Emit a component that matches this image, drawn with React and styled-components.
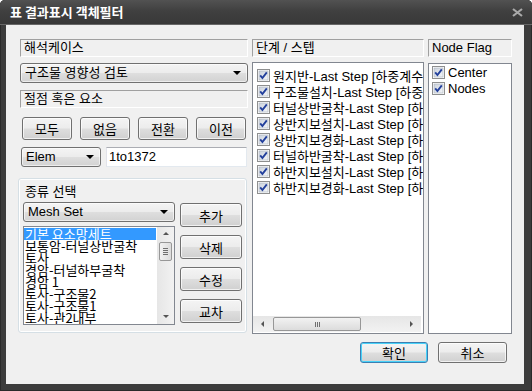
import React from 'react'
import styled, { createGlobalStyle } from 'styled-components'

const GlobalStyle = createGlobalStyle`
  body {
    margin: 0;
    background: #ffffff;
    font-family: "Liberation Sans", "Noto Sans CJK KR", sans-serif;
  }
`

const Window = styled.div`
  width: 532px;
  height: 391px;
  box-sizing: border-box;
  display: flex;
  flex-direction: column;
  background: #3c3c3c;
  border-radius: 5px 5px 0 0;
  overflow: hidden;
  box-shadow: inset 0 0 0 1px #2a2a2a;
`

const TitleBar = styled.div`
  height: 24px;
  flex: none;
  display: flex;
  align-items: center;
  justify-content: space-between;
  padding: 0 9px 0 10px;
  background: linear-gradient(#525252, #404040 45%, #383838);
  border-bottom: 1px solid #676767;
`

const Title = styled.span`
  color: #ffffff;
  font-family: "Noto Sans CJK KR", sans-serif;
  font-weight: bold;
  font-size: 13px;
  line-height: 16px;
`

const Client = styled.div`
  flex: 1;
  margin: 0 8px 7px 6px;
  background: #f0f0f0;
  padding: 14px 12px 0 14px;
  display: flex;
  flex-direction: column;
`

const Columns = styled.div`
  display: grid;
  grid-template-columns: 228px 172px 84px;
  column-gap: 4px;
  height: 295px;
`

const Column = styled.div`
  display: flex;
  flex-direction: column;
  min-width: 0;
`

const Caption = styled.div`
  flex: none;
  height: 18px;
  box-sizing: border-box;
  margin-top: ${p => p.$gap || 0}px;
  border: 1px solid;
  border-color: #a0a0a0 #ffffff #ffffff #a0a0a0;
  padding-left: 3px;
  font-size: 13px;
  line-height: 16px;
  color: #000;
  white-space: nowrap;
`

const Combo = styled.div`
  flex: none;
  width: ${p => (p.$w ? `${p.$w}px` : 'auto')};
  height: 20px;
  box-sizing: border-box;
  margin-top: ${p => p.$gap || 0}px;
  border: 1px solid #707070;
  border-radius: 3px;
  background: linear-gradient(#f4f4f4, #ececec 48%, #dedede 52%, #d2d2d2);
  box-shadow: inset 0 0 0 1px rgba(255, 255, 255, 0.6);
  display: flex;
  align-items: center;
  justify-content: space-between;
  padding: 0 6px 0 4px;
  font-size: 13px;
  line-height: 16px;
  white-space: nowrap;
`

const Arrow = styled.span`
  width: 0;
  height: 0;
  border-left: 4px solid transparent;
  border-right: 4px solid transparent;
  border-top: 4px solid #000;
`

const PushButton = styled.button`
  flex: none;
  width: ${p => p.$w}px;
  height: ${p => p.$h}px;
  box-sizing: border-box;
  padding: 0;
  border: 1px solid ${p => (p.$primary ? '#3c7fb1' : '#707070')};
  border-radius: 3px;
  background: linear-gradient(#f4f4f4, #ececec 48%, #dedede 52%, #d0d0d0);
  box-shadow: inset 0 0 0 1px ${p => (p.$primary ? '#48d2f9' : 'rgba(255,255,255,0.7)')};
  font-family: "Noto Sans CJK KR", sans-serif;
  font-size: 13px;
  line-height: 1;
  color: #000;
`

const ButtonRow = styled.div`
  display: flex;
  gap: 8px;
  margin-top: 9px;
  padding-left: 2px;
`

const ElemRow = styled.div`
  display: flex;
  gap: 5px;
  margin-top: 7px;
  padding: 0 1px;
`

const TextBox = styled.div`
  flex: 1;
  height: 20px;
  box-sizing: border-box;
  background: #ffffff;
  border: 1px solid;
  border-color: #abadb3 #e3e9ef #e3e9ef #e2e3ea;
  padding-left: 2px;
  font-size: 13px;
  line-height: 17px;
`

const Group = styled.div`
  height: 155px;
  box-sizing: border-box;
  margin: 11px 1px 0 -2px;
  border: 1px solid #d5dfe5;
  border-radius: 3px;
  box-shadow: inset 0 0 0 1px #ffffff;
  padding: 5px 4px 0 4px;
`

const GroupLabel = styled.div`
  font-size: 13px;
  line-height: 16px;
  padding-left: 2px;
  margin-bottom: 2px;
`

const GroupBody = styled.div`
  display: grid;
  grid-template-columns: 152px 62px;
  column-gap: 5px;
`

const Stack = styled.div`
  display: flex;
  flex-direction: column;
  gap: ${p => p.$gap || 0}px;
  padding-top: ${p => p.$pad || 0}px;
`

const MeshList = styled.div`
  height: 99px;
  box-sizing: border-box;
  border: 1px solid #828790;
  background: #ffffff;
  display: flex;
`

const MeshItems = styled.div`
  flex: 1;
  min-width: 0;
  padding-top: 1px;
  overflow: hidden;
`

const MeshItem = styled.div`
  height: 12px;
  line-height: 12px;
  padding-left: 1px;
  margin-right: 1px;
  font-family: "Noto Sans CJK KR", sans-serif;
  font-size: 13px;
  white-space: nowrap;
  background: ${p => (p.$selected ? '#3399ff' : 'transparent')};
  color: ${p => (p.$selected ? '#ffffff' : '#000000')};
`

const VScroll = styled.div`
  width: 17px;
  flex: none;
  background: linear-gradient(to right, #e6e6e6, #f2f2f2);
  display: flex;
  flex-direction: column;
  align-items: center;
  position: relative;
`

const ScrollArrow = styled.span`
  width: 0;
  height: 0;
  border: 3px solid transparent;
  ${p => p.$dir === 'up' && 'border-bottom: 3px solid #555; margin-top: 2px;'}
  ${p => p.$dir === 'down' && 'border-top: 3px solid #555;'}
  ${p => p.$dir === 'left' && 'border-right: 3px solid #555;'}
  ${p => p.$dir === 'right' && 'border-left: 3px solid #555;'}
`

const VThumb = styled.div`
  width: 13px;
  height: 19px;
  box-sizing: border-box;
  margin: 7px 0 auto;
  border: 1px solid #979797;
  border-radius: 2px;
  background: linear-gradient(to right, #f2f2f2, #dcdcdc);
  display: flex;
  flex-direction: column;
  align-items: center;
  justify-content: center;
  gap: 1px;

  span {
    width: 5px;
    height: 1px;
    background: #6f6f6f;
  }
`

const DownSlot = styled.div`
  height: 12px;
  display: flex;
  align-items: center;
`

const CheckList = styled.div`
  flex: 1;
  min-height: 0;
  margin-top: ${p => p.$gap}px;
  border: 1px solid #828790;
  background: #ffffff;
  display: flex;
  flex-direction: column;
  overflow: hidden;
`

const Rows = styled.div`
  flex: 1;
  padding-top: ${p => p.$pad || 0}px;
  overflow: hidden;
`

const CheckRow = styled.div`
  height: 16px;
  display: flex;
  align-items: center;
  gap: 3px;
  padding-left: ${p => p.$indent}px;
  font-size: 13px;
  white-space: nowrap;
`

const HScroll = styled.div`
  flex: none;
  height: 16px;
  margin: 0 2px 1px 0;
  background: linear-gradient(#e6e6e6, #f2f2f2);
  display: flex;
  align-items: center;
`

const ArrowSlot = styled.div`
  width: 16px;
  flex: none;
  display: flex;
  justify-content: center;
`

const HThumb = styled.div`
  width: 88px;
  height: 14px;
  box-sizing: border-box;
  margin-left: 4px;
  border: 1px solid #979797;
  border-radius: 2px;
  background: linear-gradient(#f2f2f2, #dcdcdc);
  display: flex;
  justify-content: center;
  align-items: center;
  gap: 1px;

  span {
    width: 1px;
    height: 5px;
    background: #6f6f6f;
  }
`

const Footer = styled.div`
  display: flex;
  justify-content: flex-end;
  gap: 10px;
  margin-top: 8px;
  padding-right: 5px;
`

const CheckBox = () => (
  <svg width="13" height="13" viewBox="0 0 13 13" style={{ flex: 'none' }}>
    <defs>
      <linearGradient id="cbfill" x1="0" y1="0" x2="1" y2="1">
        <stop offset="0" stopColor="#cbd2dc" />
        <stop offset="1" stopColor="#f4f6f9" />
      </linearGradient>
    </defs>
    <rect x="0.5" y="0.5" width="12" height="12" fill="#ffffff" stroke="#8e8f8f" />
    <rect x="2" y="2" width="9" height="9" fill="url(#cbfill)" stroke="#a9b1bc" strokeWidth="0.6" />
    <path d="M3.2 6.4 L5.4 9 L9.8 3.4" fill="none" stroke="#23409c" strokeWidth="1.9" />
  </svg>
)

const CloseIcon = () => (
  <svg width="11" height="9" viewBox="0 0 11 9">
    <path d="M1 1 L10 8 M10 1 L1 8" stroke="#a9a9a9" strokeWidth="2.2" />
  </svg>
)

const meshSets = [
  '기본 요소망세트',
  '보통암-터널상반굴착',
  '토사',
  '경암-터널하부굴착',
  '경암 1',
  '토사-구조물2',
  '토사-구조물1',
  '토사-관2내부',
]

const stages = [
  '원지반',
  '구조물설치',
  '터널상반굴착',
  '상반지보설치',
  '상반지보경화',
  '터널하반굴착',
  '하반지보설치',
  '하반지보경화',
]

export default function App() {
  return (
    <>
      <GlobalStyle />
      <Window>
        <TitleBar>
          <Title>표 결과표시 객체필터</Title>
          <CloseIcon />
        </TitleBar>
        <Client>
          <Columns>
            <Column>
              <Caption>해석케이스</Caption>
              <Combo $gap={6}>
                구조물 영향성 검토
                <Arrow />
              </Combo>
              <Caption $gap={7}>절점 혹은 요소</Caption>
              <ButtonRow>
                <PushButton $w={50} $h={23}>모두</PushButton>
                <PushButton $w={50} $h={23}>없음</PushButton>
                <PushButton $w={50} $h={23}>전환</PushButton>
                <PushButton $w={50} $h={23}>이전</PushButton>
              </ButtonRow>
              <ElemRow>
                <Combo $w={80}>
                  Elem
                  <Arrow />
                </Combo>
                <TextBox>1to1372</TextBox>
              </ElemRow>
              <Group>
                <GroupLabel>종류 선택</GroupLabel>
                <GroupBody>
                  <Stack $gap={4}>
                    <Combo>
                      Mesh Set
                      <Arrow />
                    </Combo>
                    <MeshList>
                      <MeshItems>
                        {meshSets.map((m, i) => (
                          <MeshItem key={m} $selected={i === 0}>{m}</MeshItem>
                        ))}
                      </MeshItems>
                      <VScroll>
                        <ScrollArrow $dir="up" />
                        <VThumb>
                          <span />
                          <span />
                          <span />
                          <span />
                        </VThumb>
                        <DownSlot>
                          <ScrollArrow $dir="down" />
                        </DownSlot>
                      </VScroll>
                    </MeshList>
                  </Stack>
                  <Stack $gap={8} $pad={1}>
                    <PushButton $w={62} $h={24}>추가</PushButton>
                    <PushButton $w={62} $h={24}>삭제</PushButton>
                    <PushButton $w={62} $h={24}>수정</PushButton>
                    <PushButton $w={62} $h={24}>교차</PushButton>
                  </Stack>
                </GroupBody>
              </Group>
            </Column>

            <Column>
              <Caption>단계 / 스텝</Caption>
              <CheckList $gap={5}>
                <Rows $pad={4}>
                  {stages.map(s => (
                    <CheckRow key={s} $indent={4}>
                      <CheckBox />
                      {s}-Last Step [하중계수]
                    </CheckRow>
                  ))}
                </Rows>
                <HScroll>
                  <ArrowSlot>
                    <ScrollArrow $dir="left" />
                  </ArrowSlot>
                  <HThumb>
                    <span />
                    <span />
                    <span />
                  </HThumb>
                  <ArrowSlot style={{ marginLeft: 'auto' }}>
                    <ScrollArrow $dir="right" />
                  </ArrowSlot>
                </HScroll>
              </CheckList>
            </Column>

            <Column>
              <Caption>Node Flag</Caption>
              <CheckList $gap={6}>
                <Rows>
                  <CheckRow $indent={3}>
                    <CheckBox />
                    Center
                  </CheckRow>
                  <CheckRow $indent={3}>
                    <CheckBox />
                    Nodes
                  </CheckRow>
                </Rows>
              </CheckList>
            </Column>
          </Columns>
          <Footer>
            <PushButton $w={68} $h={21} $primary>확인</PushButton>
            <PushButton $w={69} $h={21}>취소</PushButton>
          </Footer>
        </Client>
      </Window>
    </>
  )
}
